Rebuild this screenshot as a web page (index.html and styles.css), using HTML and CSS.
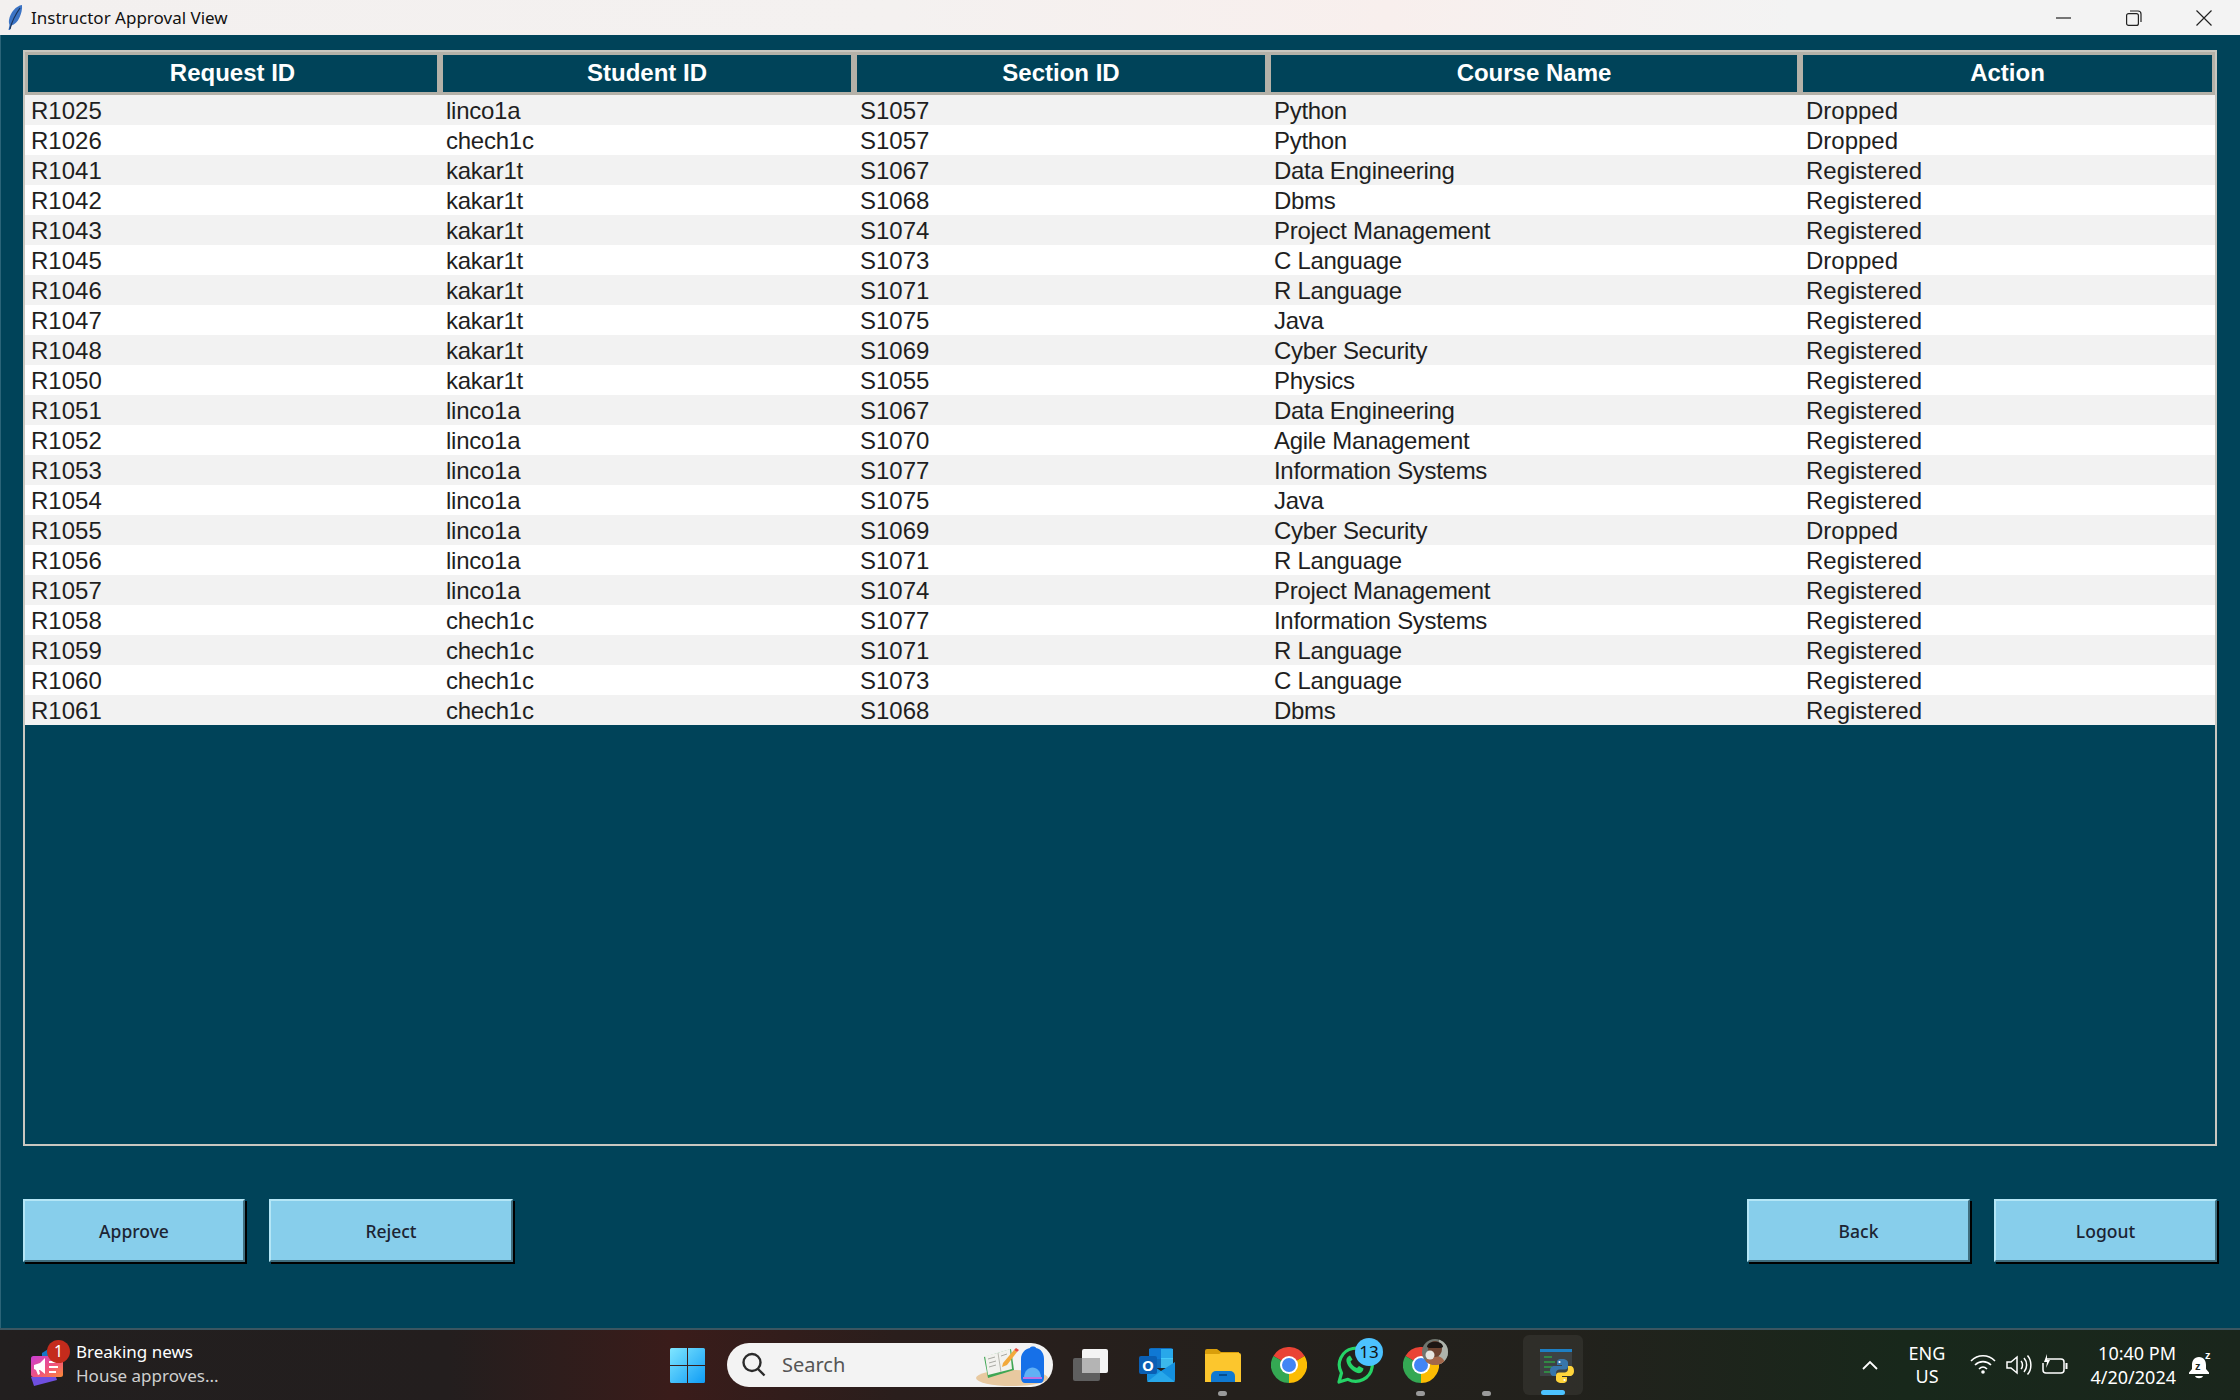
FILE: index.html
```html
<!DOCTYPE html>
<html lang="en">
<head>
    <meta charset="UTF-8">
    <title>Instructor Approval View</title>
    <link rel="stylesheet" href="styles.css">
</head>
<body>
    <header class="titlebar">
        <svg class="feather" width="18" height="28" viewBox="0 0 18 28">
            <path d="M16 1C10 2 4.500 8 3 16c-.3 2 0 3.500.5 5l-1 5h1.500l1.200-4.500c3.500-1 6.500-3.500 8.300-8C15 10 16.500 5.500 16 1z" fill="#3b73c4"/>
            <path d="M14 4C10.500 9 6.500 15 4 25" fill="none" stroke="#1b3358" stroke-width="1.200"/>
        </svg>
        <span class="title-text">Instructor Approval View</span>
        <div class="win-controls">
            <svg width="16" height="16" viewBox="0 0 16 16"><path d="M0 8h15" stroke="#222" stroke-width="1.200"/></svg>
            <svg width="16" height="16" viewBox="0 0 16 16" fill="none" stroke="#222" stroke-width="1.200"><rect x=".6" y="3.600" width="11.800" height="11.800" rx="2"/><path d="M4 1h8a3 3 0 0 1 3 3v8"/></svg>
            <svg width="16" height="16" viewBox="0 0 16 16"><path d="M.5.5l15 15M15.500.5l-15 15" stroke="#222" stroke-width="1.200"/></svg>
        </div>
    </header>

    <main class="content">
        <section class="table-frame">
            <table class="requests">
                <colgroup>
                    <col class="col-first"><col class="col-std"><col class="col-std"><col class="col-wide"><col class="col-first">
                </colgroup>
                <thead>
                    <tr><th>Request ID</th><th>Student ID</th><th>Section ID</th><th>Course Name</th><th>Action</th></tr>
                </thead>
                <tbody>
                    <tr><td>R1025</td><td>linco1a</td><td>S1057</td><td>Python</td><td>Dropped</td></tr>
                    <tr><td>R1026</td><td>chech1c</td><td>S1057</td><td>Python</td><td>Dropped</td></tr>
                    <tr><td>R1041</td><td>kakar1t</td><td>S1067</td><td>Data Engineering</td><td>Registered</td></tr>
                    <tr><td>R1042</td><td>kakar1t</td><td>S1068</td><td>Dbms</td><td>Registered</td></tr>
                    <tr><td>R1043</td><td>kakar1t</td><td>S1074</td><td>Project Management</td><td>Registered</td></tr>
                    <tr><td>R1045</td><td>kakar1t</td><td>S1073</td><td>C Language</td><td>Dropped</td></tr>
                    <tr><td>R1046</td><td>kakar1t</td><td>S1071</td><td>R Language</td><td>Registered</td></tr>
                    <tr><td>R1047</td><td>kakar1t</td><td>S1075</td><td>Java</td><td>Registered</td></tr>
                    <tr><td>R1048</td><td>kakar1t</td><td>S1069</td><td>Cyber Security</td><td>Registered</td></tr>
                    <tr><td>R1050</td><td>kakar1t</td><td>S1055</td><td>Physics</td><td>Registered</td></tr>
                    <tr><td>R1051</td><td>linco1a</td><td>S1067</td><td>Data Engineering</td><td>Registered</td></tr>
                    <tr><td>R1052</td><td>linco1a</td><td>S1070</td><td>Agile Management</td><td>Registered</td></tr>
                    <tr><td>R1053</td><td>linco1a</td><td>S1077</td><td>Information Systems</td><td>Registered</td></tr>
                    <tr><td>R1054</td><td>linco1a</td><td>S1075</td><td>Java</td><td>Registered</td></tr>
                    <tr><td>R1055</td><td>linco1a</td><td>S1069</td><td>Cyber Security</td><td>Dropped</td></tr>
                    <tr><td>R1056</td><td>linco1a</td><td>S1071</td><td>R Language</td><td>Registered</td></tr>
                    <tr><td>R1057</td><td>linco1a</td><td>S1074</td><td>Project Management</td><td>Registered</td></tr>
                    <tr><td>R1058</td><td>chech1c</td><td>S1077</td><td>Information Systems</td><td>Registered</td></tr>
                    <tr><td>R1059</td><td>chech1c</td><td>S1071</td><td>R Language</td><td>Registered</td></tr>
                    <tr><td>R1060</td><td>chech1c</td><td>S1073</td><td>C Language</td><td>Registered</td></tr>
                    <tr><td>R1061</td><td>chech1c</td><td>S1068</td><td>Dbms</td><td>Registered</td></tr>
                </tbody>
            </table>
        </section>

        <div class="actions">
            <button class="btn btn-approve">Approve</button>
            <button class="btn btn-reject">Reject</button>
            <button class="btn btn-back">Back</button>
            <button class="btn">Logout</button>
        </div>
    </main>

    <footer class="taskbar">
        <div class="news">
            <div class="news-icon">
                <svg width="36" height="40" viewBox="0 0 36 40">
                    <defs><linearGradient id="newsGrad" x1="0" y1="0" x2="1" y2="1"><stop offset="0" stop-color="#c93fd6"/><stop offset=".55" stop-color="#f0527e"/><stop offset="1" stop-color="#fb8a35"/></linearGradient></defs>
                    <path d="M3 30l3 9 23-6-2-6z" fill="#6f4fe0"/>
                    <path d="M14 6l8-5 8 4v6H14z" fill="#1576c9"/>
                    <rect x="3" y="9" width="32" height="21" rx="2.500" fill="url(#newsGrad)"/>
                    <path d="M6 18l6-2 5-5v16l-5-4-1 0 1 4-2 1-2-5-2-1z" fill="#fff"/>
                    <path d="M21 15h9M21 20h9M21 25h7" stroke="#fff" stroke-width="2"/>
                </svg>
                <span class="news-badge">1</span>
            </div>
            <div class="news-text">
                <div class="news-head">Breaking news</div>
                <div class="news-sub">House approves...</div>
            </div>
        </div>

        <div class="task-slot">
            <svg width="35" height="35" viewBox="0 0 35 35">
                <defs><linearGradient id="winGrad" x1="0" y1="0" x2="1" y2="1"><stop offset="0" stop-color="#7fe6ff"/><stop offset="1" stop-color="#0f9cf5"/></linearGradient></defs>
                <path d="M1.500 0H17v17H0V1.500A1.500 1.500 0 0 1 1.500 0zM18 0h15.500A1.500 1.500 0 0 1 35 1.500V17H18zM0 18h17v17H1.500A1.500 1.500 0 0 1 0 33.500zM18 18h17v15.500a1.500 1.500 0 0 1-1.500 1.500H18z" fill="url(#winGrad)"/>
            </svg>
        </div>

        <div class="searchbox">
            <svg class="search-glass" width="26" height="26" viewBox="0 0 26 26" fill="none" stroke="#2b2b2b" stroke-width="2.400"><circle cx="11" cy="10.500" r="8.500"/><path d="M17 17l6.500 6.500"/></svg>
            <span class="search-label">Search</span>
            <svg class="search-deco" width="72" height="42" viewBox="0 0 72 42">
                <ellipse cx="36" cy="33" rx="36" ry="8" fill="#e8c9a0"/>
                <path d="M8 12l27-8 3 21-26 8z" fill="#3fa654"/>
                <path d="M9 11l12-3 13-4 2 20-12 3-12 3z" fill="#f2f2ee"/>
                <path d="M22 8l3 19" stroke="#b9b9b0"/>
                <path d="M12 14l7-2M13 18l7-2M13 22l7-2M25 11l6-2" stroke="#a9a9a3"/>
                <path d="M27 18l11-13 3 2-10 13-5 2z" fill="#f2a93b"/>
                <path d="M38 5l2-2 3 2-2 2z" fill="#ea4a3d"/>
                <path d="M45 33V14c0-6 4-10 9-11 0-2 6-2 6 0 5 1 8 5 8 11v19c0 3-2 5-4 5H49c-2 0-4-2-4-5z" fill="#1670e8"/>
                <path d="M48 33c0-14 17-14 17 0z" fill="#61b1f5"/>
                <path d="M47 32h19v2H47z" fill="#c06fe0"/>
            </svg>
        </div>

        <div class="task-slot">
            <svg width="36" height="32" viewBox="0 0 36 32">
                <rect x="0" y="9" width="27" height="23" rx="2" fill="#5f5f5f"/>
                <rect x="9" y="0" width="26" height="24" rx="2" fill="#f4f4f4"/>
                <rect x="9" y="9" width="18" height="15" fill="#b4b4b4"/>
            </svg>
        </div>

        <div class="task-slot">
            <svg width="36" height="34" viewBox="0 0 36 34">
                <rect x="10" y="0" width="24" height="20" rx="2" fill="#0f6cbd"/>
                <rect x="22" y="1" width="12" height="10" fill="#28a8ea"/>
                <rect x="10" y="1" width="12" height="10" fill="#0f78d4"/>
                <rect x="22" y="10" width="12" height="10" fill="#50d9ff" opacity=".7"/>
                <path d="M8 14l14 9 14-9v18a2 2 0 0 1-2 2H10a2 2 0 0 1-2-2z" fill="#1490df"/>
                <path d="M8 34l14-11 14 11z" fill="#28a8ea"/>
                <rect x="0" y="8" width="18" height="18" rx="2" fill="#0a5fb4"/>
                <text x="9" y="23" class="outlook-o">O</text>
            </svg>
        </div>

        <div class="task-slot">
            <svg width="36" height="33" viewBox="0 0 36 33">
                <path d="M0 2a2 2 0 0 1 2-2h10l4 3h18v28H0z" fill="#d99e0b"/>
                <path d="M0 5h14l2-1h18a2 2 0 0 1 2 2v27H0z" fill="#fcc62d"/>
                <path d="M6 33v-6a5 5 0 0 1 5-5h14a5 5 0 0 1 5 5v6z" fill="#0f79d1"/>
                <path d="M14 26h8" stroke="#053f78" stroke-width="1.500"/>
            </svg>
            <span class="run-dot"></span>
        </div>

        <div class="task-slot">
            <svg width="36" height="36" viewBox="0 0 36 36"><use href="#chromeIcon"/></svg>
        </div>

        <div class="task-slot">
            <svg width="38" height="38" viewBox="0 0 38 38">
                <path d="M3 36l2.500-9A16.500 16.500 0 1 1 12 33.300z" fill="none" stroke="#25d366" stroke-width="3.200" stroke-linejoin="round"/>
                <path d="M13 10c-2 1-3 3-2.500 5.500 1 5 6 10 11 11.500 2.500.5 4.500-.5 5.500-2.500l.5-2-4.500-2.500-2 2c-3-1-5.500-3.500-6.500-6.500l2-2-2.500-4z" fill="#25d366"/>
            </svg>
            <span class="wa-badge">13</span>
        </div>

        <div class="task-slot">
            <svg width="36" height="36" viewBox="0 0 36 36">
                <defs>
                    <g id="chromeIcon">
                        <path d="M18 18L2.400 9A18 18 0 0 1 33.600 9z" fill="#ea4335"/>
                        <path d="M18 18L33.600 9A18 18 0 0 1 18 36z" fill="#fbbc04"/>
                        <path d="M18 18L18 36A18 18 0 0 1 2.400 9z" fill="#34a853"/>
                        <circle cx="18" cy="18" r="9" fill="#fff"/>
                        <circle cx="18" cy="18" r="7" fill="#4285f4"/>
                    </g>
                </defs>
                <use href="#chromeIcon"/>
            </svg>
            <svg class="avatar" width="26" height="26" viewBox="0 0 26 26">
                <defs><clipPath id="avatarClip"><circle cx="13" cy="13" r="13"/></clipPath></defs>
                <g clip-path="url(#avatarClip)">
                    <rect width="26" height="26" fill="#6f756e"/>
                    <rect x="17" width="9" height="26" fill="#aeb3ab"/>
                    <path d="M3 26c0-6 4-9 10-9s10 3 10 9z" fill="#a3674a"/>
                    <ellipse cx="13" cy="10" rx="7" ry="8" fill="#6d4330"/>
                    <path d="M5 8c0-7 16-7 16 0l-2 1H7z" fill="#1c1613"/>
                    <circle cx="8" cy="16" r="4.500" fill="#e6e6e0"/>
                </g>
            </svg>
            <span class="run-dot"></span>
        </div>

        <div class="task-slot">
            <span class="run-dot"></span>
        </div>

        <div class="task-slot task-active">
            <svg class="py-icon" width="34" height="34" viewBox="0 0 34 34">
                <rect x="0" y="0" width="32" height="27" fill="#3d4244"/>
                <rect x="0" y="0" width="32" height="3" fill="#1e7fc4"/>
                <path d="M4 8h8M4 13h11M4 18h8M4 23h6" stroke="#2f9e44" stroke-width="1.400"/>
                <g transform="translate(10 10)">
                    <path d="M12 0C7 0 7 2 7 3.500V6h5v1H4C2 7 0 8.500 0 12s1.500 5 3.500 5H6v-3c0-2 1.500-3.500 3.500-3.500H15c1.500 0 3-1.300 3-3V3.500C18 2 16.500 0 12 0z" fill="#3776ab"/>
                    <path d="M12 24c5 0 5-2 5-3.500V18h-5v-1h8c2 0 4-1.500 4-5s-1.500-5-3.500-5H18v3c0 2-1.500 3.500-3.500 3.500H9c-1.500 0-3 1.300-3 3v4C6 22 7.500 24 12 24z" fill="#ffd43b"/>
                    <circle cx="9.500" cy="3" r="1.100" fill="#fff"/>
                    <circle cx="14.500" cy="21" r="1.100" fill="#fff"/>
                </g>
            </svg>
            <span class="active-bar"></span>
        </div>

        <div class="tray">
            <svg class="tray-chevron" width="16" height="10" viewBox="0 0 16 10" fill="none" stroke="#fff" stroke-width="1.800"><path d="M1 9l7-7 7 7"/></svg>
            <div class="tray-lang"><div>ENG</div><div>US</div></div>
            <div class="tray-icons">
                <svg width="26" height="20" viewBox="0 0 26 20" fill="none" stroke="#fff" stroke-width="1.600"><path d="M1 7c7-7 17-7 24 0M5 11c4.500-4.500 11.500-4.500 16 0M9 15c2.500-2.500 5.500-2.500 8 0"/><circle cx="13" cy="18" r="1.800" fill="#fff" stroke="none"/></svg>
                <svg width="26" height="22" viewBox="0 0 26 22" fill="none" stroke="#fff" stroke-width="1.500"><path d="M1 8h4l6-5v16l-6-5H1z"/><path d="M15 7c2 2 2 6 0 8M18 4c3.500 4 3.500 10 0 14M21.500 1.500c4.500 5 4.500 14 0 19"/></svg>
                <svg width="26" height="22" viewBox="0 0 26 22" fill="none" stroke="#fff" stroke-width="1.500"><path d="M5 5h14a3 3 0 0 1 3 3v8a3 3 0 0 1-3 3H4a3 3 0 0 1-3-3V9"/><path d="M24.500 9v6" stroke-width="2"/><path d="M5 0L2 8h3l-1 6 4-8H5z" fill="#fff" stroke="none"/></svg>
            </div>
            <div class="tray-clock"><div>10:40 PM</div><div>4/20/2024</div></div>
            <svg class="tray-bell" width="30" height="34" viewBox="0 -8 30 34">
                <path d="M11 3C6 3 4 7 4 11v4l-3 3.500V20h20v-1.500L18 15v-4c0-4-2-8-7-8z" fill="#fff"/>
                <path d="M7 22c1 3 7 3 8 0z" fill="#fff"/>
                <text x="7" y="16" class="bell-z">z</text>
                <text x="17" y="5" class="bell-z2">z</text>
            </svg>
        </div>
    </footer>
</body>
</html>
```

FILE: styles.css
```css
* {
    box-sizing: border-box;
}
html, body {
    margin: 0;
    padding: 0;
}
body {
    width: 2240px;
    height: 1400px;
    display: flex;
    flex-direction: column;
    overflow: hidden;
    font-family: "Liberation Sans", Arial, sans-serif;
    background-color: #004359;
}

/* title bar */
.titlebar {
    height: 35px;
    flex: none;
    display: flex;
    align-items: center;
    padding-left: 6px;
    background: linear-gradient(90deg, #f3f0ef 0%, #f4f1f0 40%, #f8efed 62%, #f3f3f3 80%);
}
.feather {
    flex: none;
}
.title-text {
    margin-left: 7px;
    font-family: "Noto Sans", sans-serif;
    font-size: 17px;
    color: #111;
}
.win-controls {
    margin-left: auto;
    display: flex;
    gap: 54px;
    padding-right: 28px;
}

/* main window */
.content {
    flex: 1;
    padding: 15px 23px 0;
    border-left: 1px solid #2b6478;
    display: flex;
    flex-direction: column;
}
.table-frame {
    height: 1096px;
    margin-left: -1px;
    border: 2px solid #c9c7c0;
}
.requests {
    width: 2190px;
    table-layout: fixed;
    border-collapse: separate;
    border-spacing: 0;
}
.col-first { width: 415px; }
.col-std { width: 414px; }
.col-wide { width: 532px; }
.requests th {
    height: 43px;
    padding: 0 0 1px;
    background-color: #004359;
    color: #fff;
    font-size: 24px;
    font-weight: bold;
    border: 3px solid #b4b1a8;
}
.requests td {
    height: 30px;
    padding: 1px 0 0 6px;
    font-size: 24px;
    line-height: 29px;
    color: #1f1f1f;
    white-space: nowrap;
}
.requests td:nth-child(2) {
    letter-spacing: -0.25px;
}
.requests td:nth-child(4) {
    letter-spacing: -0.3px;
}
.requests tbody tr {
    background-color: #fff;
}
.requests tbody tr:nth-child(odd) {
    background-color: #f2f2f2;
}

/* buttons */
.actions {
    display: flex;
    gap: 24px;
    margin-top: 53px;
    margin-left: -1px;
}
.btn {
    width: 223px;
    height: 63px;
    padding: 0;
    background-color: #87ceeb;
    border: 2px solid;
    border-color: #b4e6f6 #3f6f80 #3f6f80 #b4e6f6;
    box-shadow: 2px 2px 0 #000;
    font-family: "Noto Sans", sans-serif;
    font-size: 17.5px;
    font-weight: 500;
    color: #1c2433;
}
.btn-approve {
    width: 222px;
}
.btn-reject {
    width: 244px;
}
.btn-back {
    margin-left: auto;
}

/* taskbar */
.taskbar {
    height: 72px;
    flex: none;
    display: flex;
    align-items: center;
    border-top: 2px solid #3b5661;
    background: linear-gradient(90deg, #221f1f 0%, #231e1e 20%, #3a1c1a 30%, #2a1e1c 40%, #24201c 55%, #22211c 70%, #18281b 85%, #1a261c 100%);
    font-family: "Noto Sans", sans-serif;
    color: #fff;
}
.news {
    width: 654px;
    flex: none;
    display: flex;
    align-items: center;
    padding-left: 28px;
}
.news-icon {
    position: relative;
    width: 48px;
    height: 44px;
    flex: none;
    padding-top: 4px;
}
.news-badge {
    position: absolute;
    left: 19px;
    top: -3px;
    width: 23px;
    height: 23px;
    border-radius: 50%;
    background-color: #c42b1c;
    color: #fff;
    font-size: 16px;
    line-height: 23px;
    text-align: center;
}
.news-text {
    font-size: 17px;
    line-height: 24px;
    margin-top: -2px;
}
.news-sub {
    color: #cfcfcf;
}
.task-slot {
    position: relative;
    width: 66px;
    height: 60px;
    flex: none;
    display: flex;
    align-items: center;
    justify-content: center;
}
.task-active {
    background-color: rgba(255, 255, 255, 0.06);
    border-radius: 6px;
    margin-left: 3px;
    width: 60px;
}
.py-icon {
    margin-left: 8px;
    margin-top: 2px;
}
.searchbox {
    width: 326px;
    height: 44px;
    margin: 0 5px 0 7px;
    flex: none;
    display: flex;
    align-items: center;
    border-radius: 22px;
    background-color: #f3f3f3;
    padding-left: 14px;
    overflow: hidden;
}
.search-label {
    margin-left: 15px;
    margin-top: -2px;
    font-size: 20px;
    color: #555;
}
.search-deco {
    margin-left: auto;
    margin-right: 5px;
    align-self: flex-end;
}
.run-dot {
    position: absolute;
    left: 28px;
    bottom: -1px;
    width: 9px;
    height: 5px;
    border-radius: 3px;
    background-color: #9a9a9a;
}
.active-bar {
    position: absolute;
    left: 18px;
    bottom: 0;
    width: 24px;
    height: 5px;
    border-radius: 3px;
    background-color: #4cc2ff;
}
.wa-badge {
    position: absolute;
    left: 33px;
    top: 3px;
    width: 28px;
    height: 28px;
    border-radius: 50%;
    background-color: #4cc2ff;
    color: #111;
    font-size: 17px;
    line-height: 28px;
    text-align: center;
}
.avatar {
    position: absolute;
    left: 34px;
    top: 4px;
}
.outlook-o {
    font-family: "Noto Sans", sans-serif;
    font-size: 15px;
    font-weight: bold;
    fill: #fff;
    text-anchor: middle;
}
.tray {
    flex: 1;
    display: flex;
    align-items: center;
    padding-left: 279px;
}
.tray-chevron {
    flex: none;
}
.tray-lang {
    width: 60px;
    margin-left: 19px;
    font-size: 18px;
    line-height: 23px;
    text-align: center;
}
.tray-icons {
    display: flex;
    gap: 10px;
    margin-left: 13px;
}
.tray-clock {
    width: 108px;
    font-size: 18px;
    line-height: 24px;
    text-align: right;
}
.tray-bell {
    margin-left: 12px;
    margin-top: -4px;
}
.bell-z {
    font-family: "Liberation Sans", sans-serif;
    font-size: 11px;
    font-weight: bold;
    fill: #1a261c;
}
.bell-z2 {
    font-family: "Liberation Sans", sans-serif;
    font-size: 11px;
    font-weight: bold;
    fill: #fff;
}
```
